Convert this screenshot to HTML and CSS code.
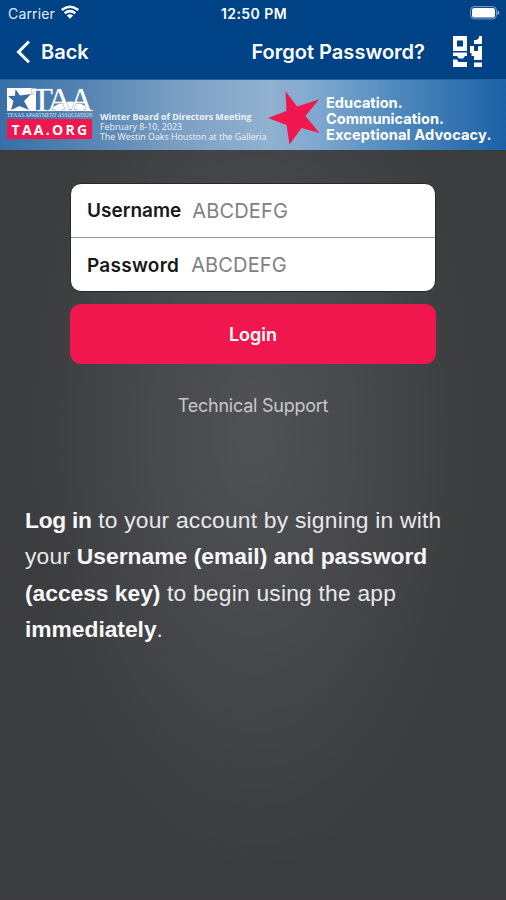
FILE: index.html
```html
<!DOCTYPE html>
<html lang="en">
<head>
<meta charset="utf-8">
<title>Login</title>
<link rel="stylesheet" href="styles.css">
</head>
<body>
<header class="top">
  <div class="status">
    <span class="carrier"><span class="carrier-name">Carrier</span>
      <svg class="wifi" viewBox="0 0 20 14" width="20" height="14"><path d="M1.7 5Q10-1.6 18.3 5M4.7 8.2Q10 4 15.3 8.2" fill="none" stroke="#fff" stroke-width="2.5"/><path d="M6.8 10.5Q10 8 13.2 10.5L10 13.7Z" fill="#fff"/></svg>
    </span>
    <span class="clock">12:50 PM</span>
    <svg class="battery" viewBox="0 0 30 14" width="30" height="14"><rect x=".6" y=".6" width="25.8" height="12.3" rx="3.5" fill="none" stroke="#7e9fc5"/><rect x="2" y="2" width="23" height="9.6" rx="2.2" fill="#fff"/><path d="M27.5 4.5Q29.3 5 29.3 6.7T27.5 9Z" fill="#9ab4d1"/></svg>
  </div>
  <nav class="nav">
    <a class="back"><svg viewBox="0 0 16 26" width="16" height="26"><path d="M15 2.5 4.500 12.9 15 23.3" fill="none" stroke="#fff" stroke-width="3"/></svg><span>Back</span></a>
    <a class="forgot">Forgot Password?</a>
    <svg class="qr" viewBox="0 0 30 32" width="30" height="32" fill="#fff"><path fill-rule="evenodd" d="M1 0H15V15H1ZM5 4.5V10.5H11V4.5ZM1 16.5H15V20H13L11 22.5H7L5 20H1ZM1 23.5H5L6.5 26H15V31H1ZM27 0H30V8H22V4H24.500L27 2ZM18 10H22V15H26V11L27 10H30V24H22V20H19.500V17H18ZM22 26.500H30V31H22Z"/></svg>
  </nav>
</header>
<section class="banner">
  <div class="brand">
    <svg class="logo" viewBox="0 0 86 25" width="86" height="25">
      <rect x="0" y="1" width="29" height="23" fill="#fff"/>
      <path d="M8.500 2 13 8.500 24 7 17 14 22 23 12.500 19 4 23 6.500 14 1 9 8 8.700Z" fill="#386ca5"/>
      <path d="M40 24Q64 5 85 24Z" fill="#fff"/>
      <text class="logo-t" x="24" y="24" textLength="22" lengthAdjust="spacingAndGlyphs">T</text>
      <text class="logo-t" x="40" y="24" textLength="25" lengthAdjust="spacingAndGlyphs">A</text>
      <text class="logo-t" x="62" y="24" textLength="24" lengthAdjust="spacingAndGlyphs">A</text>
    </svg>
    <div class="tagline">TEXAS APARTMENT ASSOCIATION</div>
    <div class="site">TAA.ORG</div>
  </div>
  <div class="meeting"><div><b>Winter Board of Directors Meeting</b></div><div>February 8-10, 2023</div><div>The Westin Oaks Houston at the Galleria</div></div>
  <svg class="star" viewBox="0 0 53 55" width="53" height="55"><path d="M17.500 0 29 15.500 51 8.500 37.500 25 51.500 42 33.500 37 21.500 53.500 18.500 34 0 27 18.500 20Z" fill="#f0174e"/></svg>
  <div class="slogan"><div>Education.</div><div>Communication.</div><div class="adv">Exceptional Advocacy.</div></div>
</section>
<main class="main">
  <form class="form">
    <div class="fields">
      <label class="field"><b class="user">Username</b><span>ABCDEFG</span></label>
      <label class="field"><b class="pass">Password</b><span>ABCDEFG</span></label>
    </div>
    <div class="login"><span>Login</span></div>
  </form>
  <a class="support">Technical Support</a>
  <div class="intro">
    <div class="l1"><b>Log in</b> to your account by signing in with</div>
    <div class="l2">your <b>Username (email) and password</b></div>
    <div class="l3"><b>(access key)</b> to begin using the app</div>
    <div class="l4"><b>immediately</b>.</div>
  </div>
</main>
</body>
</html>
```
FILE: styles.css
```css
* { box-sizing: border-box; }
body { margin: 0; width: 506px; height: 900px; overflow: hidden; display: flex; flex-direction: column; font-family: Inter, "Liberation Sans", sans-serif; background: #3b3c3e; }
.top { height: 79px; background: #004286; color: #fff; }
.status { height: 26px; display: grid; grid-template-columns: 1fr auto 1fr; align-items: center; padding: 0 6px 0 8px; font-size: 13px; }
.carrier { display: flex; align-items: center; gap: 5px; color: #e4edf7; }
.carrier-name { font-size: 14px; letter-spacing: .15px; }
.wifi { margin-top: -2px; }
.clock { font-weight: 600; font-size: 14px; letter-spacing: .45px; }
.battery { justify-self: end; }
.nav { height: 53px; display: flex; align-items: center; padding: 0 24px 2px 14px; font-size: 20px; font-weight: 600; }
.back { display: flex; align-items: center; gap: 11px; }
.forgot { margin-left: auto; letter-spacing: .02px; }
.qr { margin-left: 27px; }
.banner { height: 71px; display: flex; align-items: flex-start; padding-left: 7px; color: #fff; border-top: 1px solid #2c659e; background: linear-gradient(90deg, #386fa8 0, #5684b2 17%, #7ca0c3 36%, #91b1d0 53%, #81a9cf 62%, #4b86bb 80%, #1c61a6 100%); }
.brand { width: 86px; padding-top: 7px; }
.logo { display: block; overflow: visible; }
.logo-t { font: 33px "Liberation Serif", serif; fill: #fff; stroke: #6d94bd; stroke-width: .8px; paint-order: stroke; }
.tagline { font: 5.4px/7px "Liberation Serif", serif; color: #d5e2ef; white-space: nowrap; letter-spacing: -.05px; }
.site { width: 85px; height: 20px; background: #f0174e; font: 700 14px/21px "Open Sans", sans-serif; letter-spacing: 2.3px; text-align: center; padding-left: 2px; white-space: nowrap; }
.meeting { width: 168px; margin: 33px 0 0 7px; font: 8.85px/9.9px "Open Sans", sans-serif; white-space: nowrap; color: #edf4fb; }
.star { margin: 11px 0 0 0; flex: none; }
.slogan { margin: 15px 0 0 5px; font-size: 14.6px; line-height: 16px; font-weight: 700; white-space: nowrap; }
.adv { letter-spacing: .13px; }
.main { flex: 1; display: flex; flex-direction: column; align-items: center; padding-top: 33px; border-bottom: 2px solid #403b40; background: radial-gradient(ellipse 230px 440px at 50% 38%, #515256 0, #47484b 48%, #3b3c3e 100%); }
.form { width: 366px; }
.fields { height: 109px; border: 1px solid #27282a; border-radius: 11px; background: #fff; overflow: hidden; }
.field { height: 53px; display: flex; align-items: center; padding-left: 16px; font-size: 19px; color: #17181a; }
.field b { font-weight: 600; }
.pass { letter-spacing: .26px; }
.field span { margin-left: 11px; color: #808184; font-size: 20px; letter-spacing: .15px; }
.field + .field { height: 55px; border-top: 1px solid #98989a; }
.field + .field span { margin-left: 12px; }
.login { height: 60px; margin-top: 12px; border-radius: 11px; background: #f0174e; color: #fff; display: flex; align-items: center; justify-content: center; font-size: 18px; font-weight: 600; }
.support { margin-top: 31px; color: #c7c8ca; font-size: 18px; line-height: 22px; letter-spacing: -.25px; }
.intro { width: 456px; margin-top: 85px; color: #e8e9ea; font: 22.8px/36.3px "Liberation Sans", sans-serif; white-space: nowrap; letter-spacing: .22px; }
.intro b { color: #f8f8f8; letter-spacing: -.02px; }
.intro .l1 b { letter-spacing: -.3px; }
.intro .l2 b { letter-spacing: .03px; }
```
